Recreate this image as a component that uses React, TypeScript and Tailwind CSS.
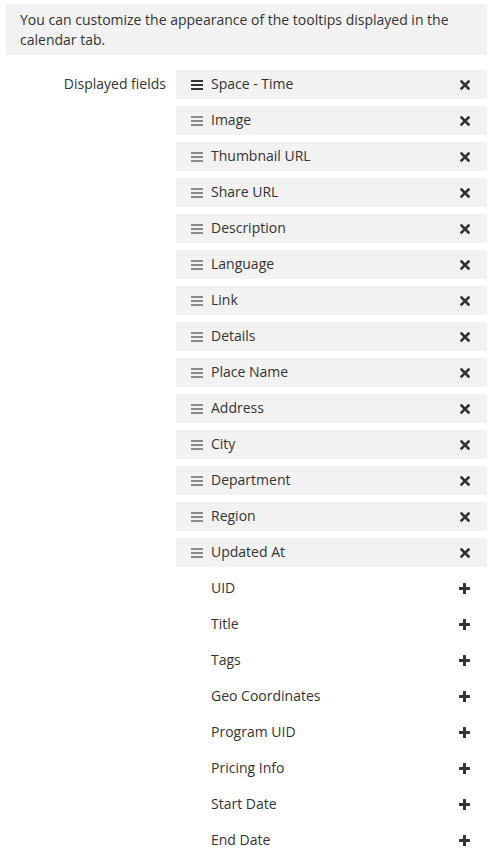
const SELECTED = [
  "Space - Time",
  "Image",
  "Thumbnail URL",
  "Share URL",
  "Description",
  "Language",
  "Link",
  "Details",
  "Place Name",
  "Address",
  "City",
  "Department",
  "Region",
  "Updated At",
];

const AVAILABLE = [
  "UID",
  "Title",
  "Tags",
  "Geo Coordinates",
  "Program UID",
  "Pricing Info",
  "Start Date",
  "End Date",
];

function Bars({ dark }: { dark?: boolean }) {
  return (
    <svg width="12" height="10" viewBox="0 0 12 10" className={dark ? "text-[#333]" : "text-[#8a8a8a]"}>
      <rect x="0" y="0" width="12" height="2" fill="currentColor" />
      <rect x="0" y="4" width="12" height="2" fill="currentColor" />
      <rect x="0" y="8" width="12" height="2" fill="currentColor" />
    </svg>
  );
}

function Cross() {
  return (
    <svg width="10" height="10" viewBox="0 0 10 10" className="text-[#333]">
      <path d="M1.5 1.5 L8.5 8.5 M8.5 1.5 L1.5 8.5" stroke="currentColor" strokeWidth="2.6" strokeLinecap="square" />
    </svg>
  );
}

function Plus() {
  return (
    <svg width="11" height="11" viewBox="0 0 11 11" className="text-[#333]">
      <rect x="4" y="0" width="3" height="11" rx="0.5" fill="currentColor" />
      <rect x="0" y="4" width="11" height="3" rx="0.5" fill="currentColor" />
    </svg>
  );
}

export default function App() {
  return (
    <div className="w-[495px] h-[864px] bg-white overflow-hidden text-[14px] text-[#333] font-['Open_Sans',sans-serif]">
      {/* info notice */}
      <div className="mx-[6px] mt-[4px] w-[481px] bg-[#f2f2f2] px-[14px] pt-[6px] pb-[5px] leading-[20px]">
        You can customize the appearance of the tooltips displayed in the calendar tab.
      </div>

      <div className="mt-[15px] flex">
        <div className="w-[176px] shrink-0 pr-[10px] text-right leading-[27px]">Displayed fields</div>

        <div className="w-[311px] flex flex-col gap-[7px]">
          {SELECTED.map((name, i) => (
            <div key={name} className="h-[29px] flex items-center bg-[#f2f2f2] pl-[15px] pr-[17px]">
              <Bars dark={i === 0} />
              <span className="ml-[8px] flex-1 leading-[27px] pb-[2px]">{name}</span>
              <Cross />
            </div>
          ))}
          {AVAILABLE.map((name) => (
            <div key={name} className="h-[29px] flex items-center pl-[35px] pr-[17px]">
              <span className="flex-1 leading-[27px] pb-[2px]">{name}</span>
              <Plus />
            </div>
          ))}
        </div>
      </div>
    </div>
  );
}
